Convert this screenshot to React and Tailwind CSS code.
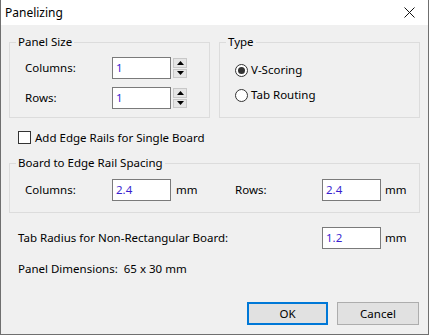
import React from 'react'

const font = { fontFamily: '"Noto Sans", "Open Sans", sans-serif' }

function NumBox({ value, w = 'w-[59px]' }) {
  return (
    <div className={`${w} h-[22px] bg-white border border-[#7a7a7a] flex items-center pl-[3px] text-[#3a1fd0]`}>
      {value}
    </div>
  )
}

function Spinner() {
  return (
    <div className="w-[14px] h-[20px] flex flex-col gap-[1px] ml-[2px]">
      <div className="flex-1 bg-[#e5e5e5] border border-[#c8c8c8] flex items-center justify-center">
        <svg width="7" height="4" viewBox="0 0 7 4"><path d="M0 4 L3.5 0 L7 4 Z" fill="#000" /></svg>
      </div>
      <div className="flex-1 bg-[#e5e5e5] border border-[#c8c8c8] flex items-center justify-center">
        <svg width="7" height="4" viewBox="0 0 7 4"><path d="M0 0 L3.5 4 L7 0 Z" fill="#000" /></svg>
      </div>
    </div>
  )
}

// legend is offset by the fieldset's own padding, so padding goes on an inner div
function Group({ title, className = '', inner = '', children }) {
  return (
    <fieldset className={`border border-[#dcdcdc] ${className}`}>
      <legend className="ml-[6px] px-[2px] leading-[16px]">{title}</legend>
      <div className={inner}>{children}</div>
    </fieldset>
  )
}

function Radio({ checked, label }) {
  return (
    <div className="flex items-center h-[16px]">
      <div className="w-[13px] h-[13px] rounded-full border border-[#333] bg-white flex items-center justify-center">
        {checked && <div className="w-[7px] h-[7px] rounded-full bg-[#333]" />}
      </div>
      <span className="ml-[3px]">{label}</span>
    </div>
  )
}

export default function App() {
  return (
    <div style={font} className="w-[429px] h-[335px] bg-[#f0f0f0] border-x border-b border-[#6f6f6f] text-[11.5px] text-black flex flex-col">
      {/* title bar */}
      <div className="h-[25px] bg-white flex items-center justify-between pl-[4px] pr-[13px] shrink-0">
        <span className="leading-[16px] text-[12px]">Panelizing</span>
        <svg width="11" height="11" viewBox="0 0 11 11">
          <path d="M0.5 0.5 L10.5 10.5 M10.5 0.5 L0.5 10.5" stroke="#111" strokeWidth="1" />
        </svg>
      </div>

      <div className="flex-1 flex flex-col px-[8px] pt-[9px] pb-[9px]">
        <div className="flex gap-[9px]">
          <Group title="Panel Size" className="w-[201px]" inner="pl-[15px] pt-[7px] pb-[7px] flex flex-col gap-[8px]">
            <div className="flex items-center">
              <span className="w-[87px]">Columns:</span>
              <NumBox value="1" />
              <Spinner />
            </div>
            <div className="flex items-center">
              <span className="w-[87px]">Rows:</span>
              <NumBox value="1" />
              <Spinner />
            </div>
          </Group>
          <Group title="Type" className="w-[201px]" inner="pl-[15px] pt-[12px] pb-[14px] flex flex-col gap-[9px]">
            <Radio checked label="V-Scoring" />
            <Radio label="Tab Routing" />
          </Group>
        </div>

        <div className="flex items-center mt-[13px] ml-[9px] h-[13px]">
          <div className="w-[13px] h-[13px] border border-[#333] bg-white" />
          <span className="ml-[4px]">Add Edge Rails for Single Board</span>
        </div>

        <Group title="Board to Edge Rail Spacing" className="mt-[11px]" inner="pl-[15px] pt-[8px] pb-[11px] flex items-center">
          <div className="w-[210px] flex items-center">
            <span className="w-[87px]">Columns:</span>
            <NumBox value="2.4" />
            <span className="ml-[5px]">mm</span>
          </div>
          <span className="w-[87px]">Rows:</span>
          <NumBox value="2.4" />
          <span className="ml-[4px]">mm</span>
        </Group>

        <div className="flex items-center mt-[14px] pl-[9px]">
          <span className="w-[304px]">Tab Radius for Non-Rectangular Board:</span>
          <NumBox value="1.2" />
          <span className="ml-[4px]">mm</span>
        </div>

        <div className="mt-[12px] pl-[9px] leading-[16px]">Panel Dimensions:&nbsp; 65 x 30 mm</div>

        <div className="mt-auto flex justify-end gap-[9px] pr-[1px]">
          <button className="w-[81px] h-[23px] bg-[#e1e1e1] border-2 border-[#0078d7]">OK</button>
          <button className="w-[82px] h-[23px] bg-[#e1e1e1] border border-[#adadad]">Cancel</button>
        </div>
      </div>
    </div>
  )
}
